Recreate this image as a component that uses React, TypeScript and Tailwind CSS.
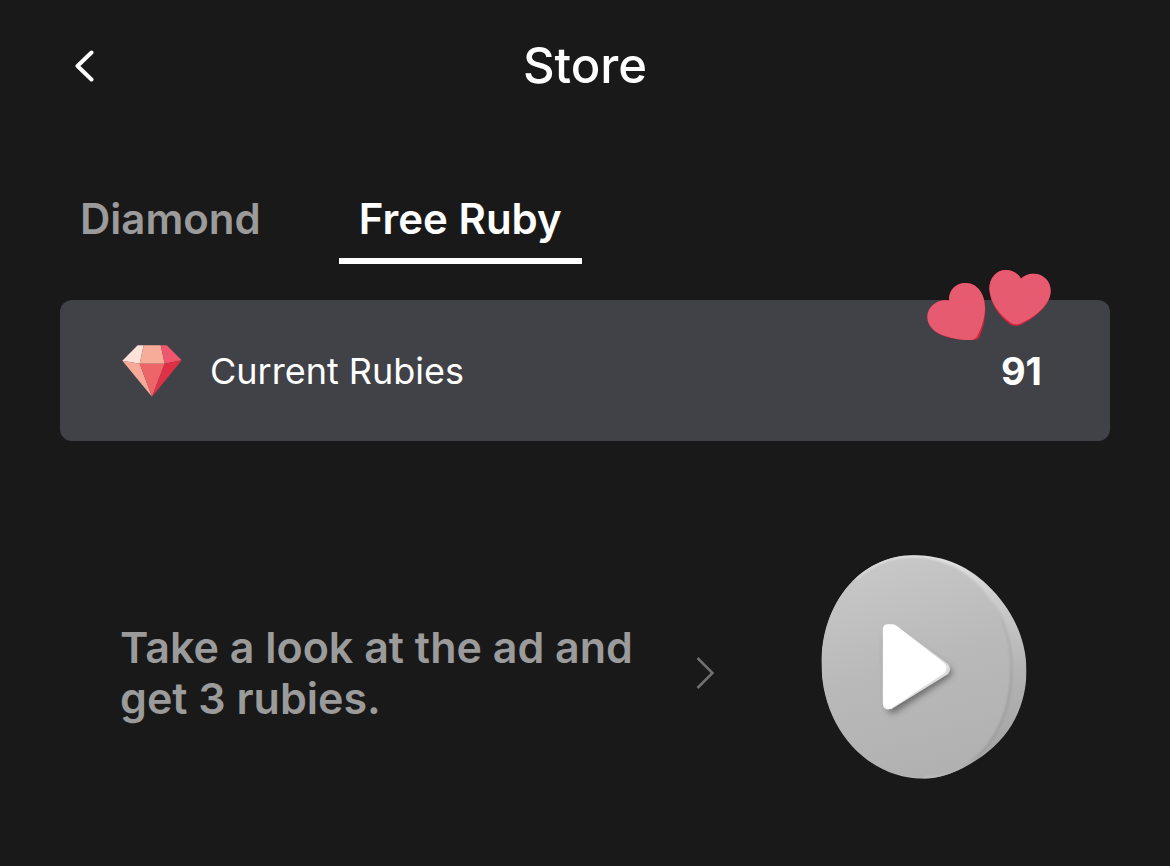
import { useState } from "react";

const tabs = ["Diamond", "Free Ruby"];

function BackIcon() {
  return (
    <svg viewBox="0 0 20 34" className="h-[34px] w-5" fill="none" aria-hidden="true">
      <path d="M17.5 3.5 L3.5 17 L17.5 30.5" stroke="white" strokeWidth="4" strokeLinecap="round" strokeLinejoin="round" />
    </svg>
  );
}

function RubyIcon() {
  return (
    <svg viewBox="216 164 178 156" className="h-[52px] w-[60px]" aria-hidden="true">
      <path d="M262 165 H280 L268 220 L216 211 Z" fill="#fde2d9" />
      <path d="M280 165 H331 L343 220 H268 Z" fill="#f7ac99" />
      <path d="M331 165 H349 L394 210 L343 220 Z" fill="#f0566d" />
      <path d="M216 211 L268 220 L305 319 Z" fill="#f9a998" />
      <path d="M268 220 H343 L305 319 Z" fill="#ed6568" />
      <path d="M343 220 L394 210 L305 319 Z" fill="#df3145" />
    </svg>
  );
}

function Hearts() {
  return (
    <svg viewBox="48 42 378 216" className="h-[72px] w-[126px]" aria-hidden="true">
      <path
        d="M118 137 C114 107 138 84 167 84 C203 84 226 119 226 159 C226 195 218 225 207 248 Q201 256 188 255 C162 256 133 252 108 245 C75 234 52 215 52 185 C52 156 82 130 118 137 Z"
        fill="#d8213c"
      />
      <path
        d="M118 137 C114 107 138 84 167 84 C203 84 225 119 225 159 C224 192 214 221 202 242 Q198 252 184 255 C158 256 131 252 108 244 C75 233 52 214 52 185 C52 156 82 130 118 137 Z"
        fill="#e75b70"
      />
      <path
        d="M333 71 C324 54 306 45 288 45 C260 45 238 68 238 102 C240 145 267 184 299 207 Q313 217 329 211 C369 194 422 152 422 108 C422 79 401 56 370 56 C354 56 341 62 333 71 Z"
        fill="#d8213c"
      />
      <path
        d="M333 71 C324 54 306 45 288 45 C260 45 238 68 238 102 C241 143 268 180 302 203 Q315 211 330 206 C370 190 422 150 422 108 C422 79 401 56 370 56 C354 56 341 62 333 71 Z"
        fill="#e75b70"
      />
    </svg>
  );
}

function PlayDisc() {
  return (
    <svg viewBox="64 44 617 672" className="h-[224px] w-[206px]" aria-hidden="true">
      <defs>
        <linearGradient id="rim" x1="0" y1="0" x2="0" y2="1">
          <stop offset="0" stopColor="#e0e0e0" />
          <stop offset="0.2" stopColor="#cdcdcd" />
          <stop offset="0.5" stopColor="#b4b4b4" />
          <stop offset="0.85" stopColor="#a6a6a6" />
          <stop offset="1" stopColor="#bdbdbd" />
        </linearGradient>
        <linearGradient id="face" x1="0.3" y1="0" x2="0.55" y2="1">
          <stop offset="0" stopColor="#c8c8c8" />
          <stop offset="0.5" stopColor="#b9b9b9" />
          <stop offset="1" stopColor="#b1b1b1" />
        </linearGradient>
        <linearGradient id="edge" x1="0" y1="0" x2="0" y2="1">
          <stop offset="0" stopColor="#e2e2e2" />
          <stop offset="0.18" stopColor="#d0d0d0" />
          <stop offset="0.3" stopColor="#b2b2b2" />
          <stop offset="0.6" stopColor="#a0a0a0" />
          <stop offset="0.9" stopColor="#9c9c9c" />
          <stop offset="1" stopColor="#c0c0c0" />
        </linearGradient>
        <filter id="soft" x="-10%" y="-10%" width="120%" height="120%">
          <feGaussianBlur stdDeviation="2.5" />
        </filter>
        <filter id="shadow" x="-30%" y="-30%" width="160%" height="160%">
          <feGaussianBlur stdDeviation="9" />
        </filter>
        <clipPath id="disc">
          <path d="M340 45 C430 44 511 78 577 148 C644 218 680 304 680 390 C680 497 632 588 548 647 C498 682 436 715 372 715 C200 715 65 560 65 370 C65 190 180 46 340 45 Z" />
        </clipPath>
      </defs>
      <g clipPath="url(#disc)">
        <rect x="60" y="40" width="625" height="680" fill="url(#rim)" />
        <path
          d="M340 48 C510 48 635 196 635 384 C635 570 525 713 372 713 C202 713 65 560 65 370 C65 190 180 48 340 48 Z"
          fill="url(#face)"
        />
        <path
          d="M170 115 C220 70 270 48 340 48 C510 48 635 196 635 384 C635 570 525 713 372 713"
          fill="none"
          stroke="url(#edge)"
          strokeWidth="7"
          filter="url(#soft)"
        />
      </g>
      <path d="M258 290 L290 280 L456 388 Q460 400 449 410 L290 514 Q272 524 263 508 Z" fill="#555" opacity="0.75" filter="url(#shadow)" />
      <path d="M270 253 H285 L444 370 Q457 384 445 401 L272 508 Z" fill="#dddddd" />
      <path
        d="M249 268 Q249 252 265 252 H276 Q284 252 292 258 L433 368 Q447 383 433 399 L275 504 Q266 510 257 505 Q249 500 249 490 Z"
        fill="white"
      />
    </svg>
  );
}

export default function App() {
  const [active, setActive] = useState("Free Ruby");

  return (
    <div className="min-h-screen bg-[#191919] px-[60px] font-['Inter',sans-serif] text-white">
      <header className="grid h-[132px] grid-cols-[48px_1fr_48px] items-center">
        <button type="button" aria-label="Back" className="flex h-12 items-center justify-center">
          <BackIcon />
        </button>
        <h1 className="text-center text-[49px] leading-[60px] font-medium">Store</h1>
      </header>

      <div role="tablist" className="mt-12 flex gap-[58px]">
        {tabs.map((tab) => (
          <button
            key={tab}
            type="button"
            role="tab"
            aria-selected={active === tab}
            onClick={() => setActive(tab)}
            className={`h-[84px] border-b-6 px-5 text-[42px] leading-[52px] font-semibold ${
              active === tab ? "border-white text-white" : "border-transparent text-[#9b9b9b]"
            }`}
          >
            {tab}
          </button>
        ))}
      </div>

      <section className="relative mt-9 flex h-[141px] items-center rounded-xl bg-[#414247] pr-[68px] pl-[62px]">
        <RubyIcon />
        <span className="ml-7 text-[36px] leading-[48px]">Current Rubies</span>
        <span className="ml-auto text-[38px] leading-[48px] font-bold">91</span>
        <div className="absolute -top-[31px] right-[58px]">
          <Hearts />
        </div>
      </section>

      <button type="button" className="mt-[114px] flex w-full items-center pr-[83px] pl-[60px] text-left">
        <span className="w-[540px] pt-3 text-[43px] leading-[51px] font-semibold text-[#9b9b9b]">
          Take a look at the ad and get 3 rubies.
        </span>
        <span className="ml-[35px] pt-3">
          <svg viewBox="0 0 20 36" className="h-9 w-5" fill="none" aria-hidden="true">
            <path d="M2.5 3 L17.5 18 L2.5 33" stroke="#707070" strokeWidth="2.5" />
          </svg>
        </span>
        <span className="ml-auto">
          <PlayDisc />
        </span>
      </button>
    </div>
  );
}
